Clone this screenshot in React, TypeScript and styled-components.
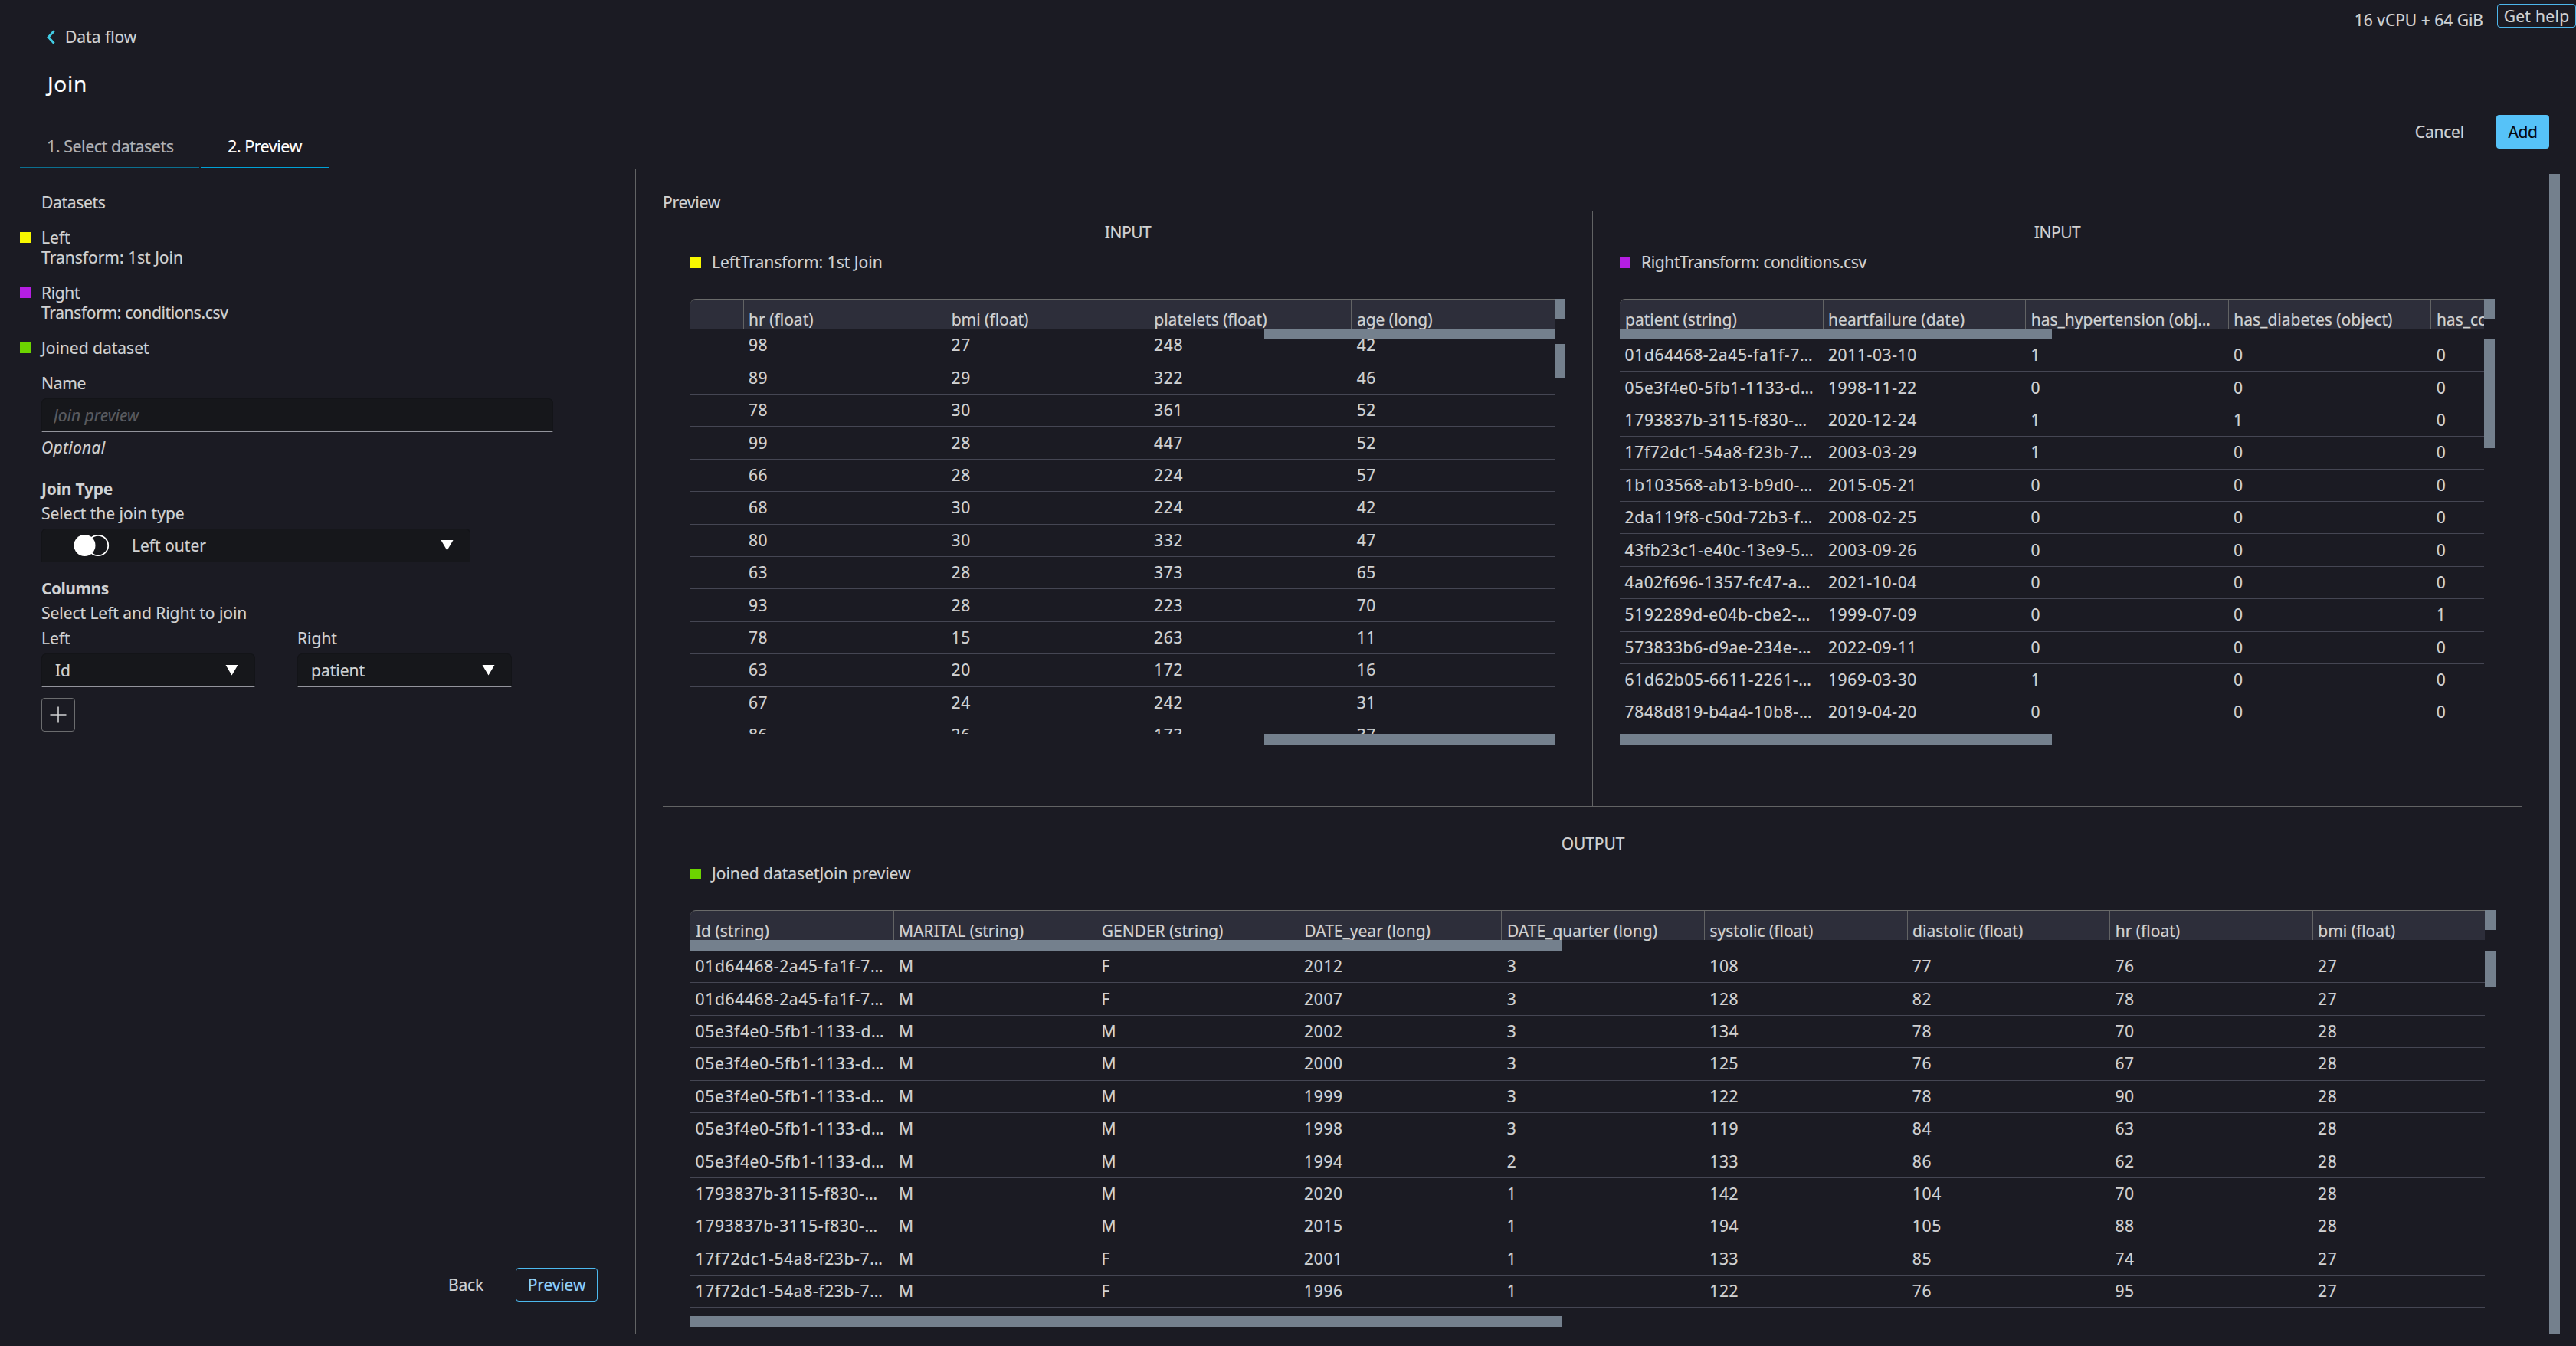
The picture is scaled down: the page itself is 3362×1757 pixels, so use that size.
import React from "react";
import styled, { createGlobalStyle } from "styled-components";

const GlobalStyle = createGlobalStyle`
  * { box-sizing: border-box; }
  html, body { margin: 0; background: #1b1b23; overflow: hidden; }
  body {
    font-family: "Noto Sans", "Open Sans", sans-serif;
    font-size: 21px;
    line-height: 26px;
    color: #d1d2d3;
    -webkit-text-stroke: 0.2px currentColor;
  }
  button, input { font: inherit; color: inherit; }
`;

/* ---------- shell ---------- */

const Shell = styled.div`
  display: flex;
  flex-direction: column;
  width: 3362px;
  height: 1757px;
  background: #1b1b23;
  overflow: hidden;
`;

const TopBar = styled.header`
  display: flex;
  justify-content: space-between;
  align-items: flex-start;
  height: 75px;
  padding-left: 61px;
`;

const BackLink = styled.a`
  display: flex;
  align-items: center;
  gap: 13px;
  height: 28px;
  margin-top: 34px;
`;

const Status = styled.div`
  display: flex;
  align-items: flex-start;
`;

const Resources = styled.span`
  line-height: 28px;
  padding: 12px 18px 0 0;
`;

const HelpButton = styled.button`
  width: 103px;
  height: 31px;
  margin-top: 5px;
  padding: 1px 0 0;
  line-height: 28px;
  letter-spacing: 0.3px;
  white-space: nowrap;
  background: transparent;
  border: 1px solid #4db5ea;
  border-radius: 4px;
`;

const PageTitle = styled.h1`
  height: 54px;
  margin: 0;
  padding: 14px 0 0 62px;
  font-size: 28px;
  font-weight: 400;
  line-height: 40px;
  letter-spacing: 0.7px;
  color: #fff;
`;

const TabBar = styled.nav`
  display: flex;
  justify-content: space-between;
  height: 92px;
  margin: 0 21px 0 26px;
  border-bottom: 1px solid #34353d;
`;

const Tabs = styled.div`
  display: flex;
  align-items: flex-end;
  gap: 2px;
  padding-bottom: 1px;
`;

const Tab = styled.a<{ $active?: boolean; $width: number }>`
  width: ${(p) => p.$width}px;
  padding: 0 0 13px 35px;
  font-size: 21.5px;
  line-height: 28px;
  letter-spacing: -0.5px;
  white-space: nowrap;
  color: ${(p) => (p.$active ? "#fff" : "#b0b1b4")};
  border-bottom: 1px solid ${(p) => (p.$active ? "#00a1d6" : "#0b6f90")};
`;

const Actions = styled.div`
  display: flex;
  align-items: center;
  gap: 42px;
  height: 44px;
  margin: 21px 14px 0 0;
`;

const PlainButton = styled.button`
  padding: 0;
  background: none;
  border: 0;
  letter-spacing: -0.2px;
`;

const AddButton = styled.button`
  width: 69px;
  height: 44px;
  padding: 0;
  border: 0;
  border-radius: 4px;
  letter-spacing: -0.4px;
  color: #07090c;
  background: #56c2f8;
`;

const Workspace = styled.main`
  display: flex;
  height: 1520px;
  padding-right: 21px;
`;

/* ---------- sidebar ---------- */

const Sidebar = styled.aside`
  display: flex;
  flex-direction: column;
  width: 830px;
  padding: 30px 49px 42px 26px;
  border-right: 1px solid #626364;
`;

const Indented = styled.div`
  display: flex;
  flex-direction: column;
  padding-left: 28px;
`;

const SidebarTitle = styled.div`
  padding-left: 28px;
  letter-spacing: -0.3px;
`;

const LegendRow = styled.div<{ $top: number }>`
  display: flex;
  gap: 14px;
  margin-top: ${(p) => p.$top}px;
`;

const Swatch = styled.span<{ $color: string; $drop?: number }>`
  flex: none;
  width: 14px;
  height: 14px;
  margin-top: ${(p) => p.$drop ?? 6}px;
  background: ${(p) => p.$color};
`;

const LegendText = styled.div<{ $tight?: boolean }>`
  letter-spacing: ${(p) => (p.$tight ? "-0.35px" : "0")};
  white-space: nowrap;
`;

const Label = styled.div<{ $top: number; $bold?: boolean; $italic?: boolean; $spacing?: number }>`
  margin-top: ${(p) => p.$top}px;
  font-weight: ${(p) => (p.$bold ? 700 : 400)};
  font-style: ${(p) => (p.$italic ? "italic" : "normal")};
  letter-spacing: ${(p) => p.$spacing ?? 0}px;
  -webkit-text-stroke-width: ${(p) => (p.$bold ? "0" : "0.2px")};
  white-space: nowrap;
`;

const NameInput = styled.input`
  width: 668px;
  height: 44px;
  margin-top: 7px;
  padding: 0 15px;
  outline: 0;
  background: #16171b;
  border: 1px solid #131418;
  border-bottom-color: #93949c;
  border-radius: 6px 6px 0 0;
  letter-spacing: 0;
  &::placeholder { color: #5b5c60; opacity: 1; font-style: italic; }
`;

const SelectBox = styled.div<{ $width: number; $indent: number }>`
  display: flex;
  align-items: center;
  justify-content: space-between;
  width: ${(p) => p.$width}px;
  height: 44px;
  margin-top: 7px;
  padding: 0 21px 0 ${(p) => p.$indent}px;
  background: #16171b;
  border: 1px solid #131418;
  border-bottom-color: #93949c;
  border-radius: 6px 6px 0 0;
`;

const SelectValue = styled.span`
  display: flex;
  align-items: center;
  gap: 28px;
`;

const ColumnPair = styled.div`
  display: flex;
  gap: 55px;
`;

const IconButton = styled.button`
  display: grid;
  place-items: center;
  width: 44px;
  height: 44px;
  margin-top: 14px;
  padding: 0;
  background: transparent;
  border: 1px solid #6b6c6e;
  border-radius: 4px;
`;

const SidebarFooter = styled.div`
  display: flex;
  justify-content: flex-end;
  align-items: center;
  gap: 42px;
  margin-top: auto;
`;

const PreviewButton = styled.button`
  width: 107px;
  height: 44px;
  padding: 0;
  letter-spacing: -0.1px;
  color: #92d2fa;
  background: transparent;
  border: 1px solid #4db9ee;
  border-radius: 4px;
`;

/* ---------- preview panels ---------- */

const PreviewArea = styled.section`
  display: flex;
  flex-direction: column;
  width: 2497px;
  padding: 0 35px;
`;

const PreviewTitle = styled.div`
  height: 54px;
  padding-top: 30px;
  letter-spacing: -0.2px;
`;

const Inputs = styled.div`
  display: grid;
  grid-template-columns: 1214px 1fr;
  height: 778px;
  border-bottom: 1px solid #626364;
`;

const Panel = styled.div<{ $pad: string; $divided?: boolean }>`
  display: flex;
  flex-direction: column;
  padding: ${(p) => p.$pad};
  border-right: ${(p) => (p.$divided ? "1px solid #626364" : "0")};
  min-width: 0;
`;

const PanelTitle = styled.div<{ $spacing: number }>`
  text-align: center;
  letter-spacing: ${(p) => p.$spacing}px;
`;

const Grid = styled.div`
  margin-top: 35px;
`;

const Viewport = styled.div<{ $height: number }>`
  display: grid;
  grid-template-columns: minmax(0, 1fr) 14px;
  grid-template-rows: ${(p) => p.$height}px 14px;
`;

const HeadCells = styled.div`
  display: flex;
  overflow-x: clip;
  background: #2d2e3a;
  border-top: 1px solid #6a6b6a;
  border-radius: 7px 0 0 0;
`;

const HeadCell = styled.div<{ $width: number }>`
  flex: none;
  width: ${(p) => p.$width}px;
  padding: 14px 0 0 7px;
  line-height: 24px;
  white-space: nowrap;
  & + & { padding-left: 6.5px; border-left: 1px solid #626364; }
`;

const BodyCells = styled.div`
  overflow: hidden;
`;

const Row = styled.div<{ $shift: number }>`
  display: flex;
  align-items: center;
  height: 42.4px;
  padding-bottom: 1px;
  border-bottom: 1px solid #454653;
  &:first-child { margin-top: ${(p) => -p.$shift}px; }
`;

const Cell = styled.div<{ $width: number }>`
  flex: none;
  width: ${(p) => p.$width}px;
  padding-left: 7.3px;
  letter-spacing: 0.65px;
  white-space: nowrap;
  &:first-child { padding-left: 6.6px; }
`;

const VThumb = styled.div<{ $from: number; $size: number }>`
  height: ${(p) => p.$size}px;
  margin-top: ${(p) => p.$from}px;
  background: #74808d;
`;

const HThumb = styled.div<{ $from: number; $size: number }>`
  width: ${(p) => p.$size}px;
  height: 14px;
  margin-left: ${(p) => p.$from}px;
  background: #74808d;
`;

const PageThumb = styled.div`
  width: 14px;
  margin-top: 6px;
  background: #74808d;
`;

/* ---------- icons ---------- */

const ChevronLeft = () => (
  <svg width="11" height="19" viewBox="0 0 11 19" fill="none">
    <path d="M9.5 1.5 L2.2 9.5 L9.5 17.5" stroke="#42cbe2" strokeWidth="3" />
  </svg>
);

const Caret = () => (
  <svg width="17" height="14" viewBox="0 0 17 14">
    <path d="M0.5 0 H16.5 L8.5 13.5 Z" fill="#fff" />
  </svg>
);

const LeftJoinIcon = () => (
  <svg width="48" height="30" viewBox="0 0 48 30" fill="none">
    <circle cx="32" cy="15" r="13.2" stroke="#fff" strokeWidth="1.8" />
    <circle cx="14.5" cy="15" r="14" fill="#fff" />
  </svg>
);

const PlusIcon = () => (
  <svg width="22" height="22" viewBox="0 0 22 22">
    <path d="M11 0.5 V21.5 M0.5 11 H21.5" stroke="#d1d2d3" strokeWidth="1.6" />
  </svg>
);

/* ---------- data ---------- */

const YELLOW = "#f8f800";
const PURPLE = "#b51ee2";
const GREEN = "#6cd400";
const COL = 264.6;

type Column = { label: string; width: number };
type Bar = { from: number; size: number };
type TableProps = {
  columns: Column[];
  rows: string[][];
  bodyHeight: number;
  shift?: number;
  hBar: Bar;
  vBar: Bar;
};

const leftTable: TableProps = {
  columns: [
    { label: "", width: 68.6 },
    { label: "hr (float)", width: COL },
    { label: "bmi (float)", width: COL },
    { label: "platelets (float)", width: COL },
    { label: "age (long)", width: COL + 2 },
  ],
  rows: [
    ["", "98", "27", "248", "42"],
    ["", "89", "29", "322", "46"],
    ["", "78", "30", "361", "52"],
    ["", "99", "28", "447", "52"],
    ["", "66", "28", "224", "57"],
    ["", "68", "30", "224", "42"],
    ["", "80", "30", "332", "47"],
    ["", "63", "28", "373", "65"],
    ["", "93", "28", "223", "70"],
    ["", "78", "15", "263", "11"],
    ["", "63", "20", "172", "16"],
    ["", "67", "24", "242", "31"],
    ["", "86", "26", "173", "37"],
  ],
  bodyHeight: 515,
  shift: 12.8,
  hBar: { from: 749, size: 379 },
  vBar: { from: 6, size: 45 },
};

const rightTable: TableProps = {
  columns: [
    { label: "patient (string)", width: COL },
    { label: "heartfailure (date)", width: COL },
    { label: "has_hypertension (obj…", width: COL },
    { label: "has_diabetes (object)", width: COL },
    { label: "has_co", width: 80 },
  ],
  rows: [
    ["01d64468-2a45-fa1f-7…", "2011-03-10", "1", "0", "0"],
    ["05e3f4e0-5fb1-1133-d…", "1998-11-22", "0", "0", "0"],
    ["1793837b-3115-f830-…", "2020-12-24", "1", "1", "0"],
    ["17f72dc1-54a8-f23b-7…", "2003-03-29", "1", "0", "0"],
    ["1b103568-ab13-b9d0-…", "2015-05-21", "0", "0", "0"],
    ["2da119f8-c50d-72b3-f…", "2008-02-25", "0", "0", "0"],
    ["43fb23c1-e40c-13e9-5…", "2003-09-26", "0", "0", "0"],
    ["4a02f696-1357-fc47-a…", "2021-10-04", "0", "0", "0"],
    ["5192289d-e04b-cbe2-…", "1999-07-09", "0", "0", "1"],
    ["573833b6-d9ae-234e-…", "2022-09-11", "0", "0", "0"],
    ["61d62b05-6611-2261-…", "1969-03-30", "1", "0", "0"],
    ["7848d819-b4a4-10b8-…", "2019-04-20", "0", "0", "0"],
  ],
  bodyHeight: 515,
  hBar: { from: 0, size: 564 },
  vBar: { from: 0, size: 142 },
};

const outputTable: TableProps = {
  columns: [
    { label: "Id (string)", width: COL },
    { label: "MARITAL (string)", width: COL },
    { label: "GENDER (string)", width: COL },
    { label: "DATE_year (long)", width: COL },
    { label: "DATE_quarter (long)", width: COL },
    { label: "systolic (float)", width: COL },
    { label: "diastolic (float)", width: COL },
    { label: "hr (float)", width: COL },
    { label: "bmi (float)", width: COL },
  ],
  rows: [
    ["01d64468-2a45-fa1f-7…", "M", "F", "2012", "3", "108", "77", "76", "27"],
    ["01d64468-2a45-fa1f-7…", "M", "F", "2007", "3", "128", "82", "78", "27"],
    ["05e3f4e0-5fb1-1133-d…", "M", "M", "2002", "3", "134", "78", "70", "28"],
    ["05e3f4e0-5fb1-1133-d…", "M", "M", "2000", "3", "125", "76", "67", "28"],
    ["05e3f4e0-5fb1-1133-d…", "M", "M", "1999", "3", "122", "78", "90", "28"],
    ["05e3f4e0-5fb1-1133-d…", "M", "M", "1998", "3", "119", "84", "63", "28"],
    ["05e3f4e0-5fb1-1133-d…", "M", "M", "1994", "2", "133", "86", "62", "28"],
    ["1793837b-3115-f830-…", "M", "M", "2020", "1", "142", "104", "70", "28"],
    ["1793837b-3115-f830-…", "M", "M", "2015", "1", "194", "105", "88", "28"],
    ["17f72dc1-54a8-f23b-7…", "M", "F", "2001", "1", "133", "85", "74", "27"],
    ["17f72dc1-54a8-f23b-7…", "M", "F", "1996", "1", "122", "76", "95", "27"],
  ],
  bodyHeight: 477,
  hBar: { from: 0, size: 1138 },
  vBar: { from: 0, size: 47 },
};

/* ---------- composed parts ---------- */

function DataTable({ columns, rows, bodyHeight, shift = 0, hBar, vBar }: TableProps) {
  return (
    <Grid>
      <Viewport $height={39}>
        <HeadCells>
          {columns.map((c, i) => (
            <HeadCell key={i} $width={c.width}>
              {c.label}
            </HeadCell>
          ))}
        </HeadCells>
        <VThumb $from={0} $size={26} />
        <HThumb $from={hBar.from} $size={hBar.size} />
      </Viewport>
      <Viewport $height={bodyHeight}>
        <BodyCells>
          {rows.map((r, i) => (
            <Row key={i} $shift={shift}>
              {r.map((v, j) => (
                <Cell key={j} $width={columns[j].width}>
                  {v}
                </Cell>
              ))}
            </Row>
          ))}
        </BodyCells>
        <VThumb $from={vBar.from} $size={vBar.size} />
        <HThumb $from={hBar.from} $size={hBar.size} />
      </Viewport>
    </Grid>
  );
}

function PanelLegend({ color, children, tight }: { color: string; children: string; tight?: boolean }) {
  return (
    <LegendRow $top={13}>
      <Swatch $color={color} $drop={7} />
      <LegendText $tight={tight}>{children}</LegendText>
    </LegendRow>
  );
}

export default function App() {
  return (
    <>
      <GlobalStyle />
      <Shell>
        <TopBar>
          <BackLink>
            <ChevronLeft />
            Data flow
          </BackLink>
          <Status>
            <Resources>16 vCPU + 64 GiB</Resources>
            <HelpButton>Get help</HelpButton>
          </Status>
        </TopBar>
        <PageTitle>Join</PageTitle>
        <TabBar>
          <Tabs>
            <Tab $width={234}>1. Select datasets</Tab>
            <Tab $width={167} $active>
              2. Preview
            </Tab>
          </Tabs>
          <Actions>
            <PlainButton>Cancel</PlainButton>
            <AddButton>Add</AddButton>
          </Actions>
        </TabBar>
        <Workspace>
          <Sidebar>
            <SidebarTitle>Datasets</SidebarTitle>
            <LegendRow $top={20}>
              <Swatch $color={YELLOW} />
              <LegendText>
                <div>Left</div>
                <div>Transform: 1st Join</div>
              </LegendText>
            </LegendRow>
            <LegendRow $top={20}>
              <Swatch $color={PURPLE} />
              <LegendText $tight>
                <div>Right</div>
                <div>Transform: conditions.csv</div>
              </LegendText>
            </LegendRow>
            <LegendRow $top={20}>
              <Swatch $color={GREEN} />
              <LegendText>Joined dataset</LegendText>
            </LegendRow>
            <Indented>
              <Label $top={20} $spacing={-0.3}>Name</Label>
              <NameInput placeholder="Join preview" />
              <Label $top={7} $italic $spacing={0.3}>Optional</Label>
              <Label $top={28} $bold $spacing={-0.2}>Join Type</Label>
              <Label $top={6}>Select the join type</Label>
              <SelectBox $width={560} $indent={41}>
                <SelectValue>
                  <LeftJoinIcon />
                  Left outer
                </SelectValue>
                <Caret />
              </SelectBox>
              <Label $top={21} $bold $spacing={-0.5}>Columns</Label>
              <Label $top={6} $spacing={-0.05}>Select Left and Right to join</Label>
              <ColumnPair>
                <div>
                  <Label $top={7}>Left</Label>
                  <SelectBox $width={279} $indent={17}>
                    Id
                    <Caret />
                  </SelectBox>
                </div>
                <div>
                  <Label $top={7}>Right</Label>
                  <SelectBox $width={280} $indent={17}>
                    patient
                    <Caret />
                  </SelectBox>
                </div>
              </ColumnPair>
              <IconButton aria-label="Add column pair">
                <PlusIcon />
              </IconButton>
            </Indented>
            <SidebarFooter>
              <PlainButton>Back</PlainButton>
              <PreviewButton>Preview</PreviewButton>
            </SidebarFooter>
          </Sidebar>
          <PreviewArea>
            <PreviewTitle>Preview</PreviewTitle>
            <Inputs>
              <Panel $pad="15px 35px 0 36px" $divided>
                <PanelTitle $spacing={-0.5}>INPUT</PanelTitle>
                <PanelLegend color={YELLOW}>LeftTransform: 1st Join</PanelLegend>
                <DataTable {...leftTable} />
              </Panel>
              <Panel $pad="15px 36px 0 35px">
                <PanelTitle $spacing={-0.5}>INPUT</PanelTitle>
                <PanelLegend color={PURPLE} tight>
                  RightTransform: conditions.csv
                </PanelLegend>
                <DataTable {...rightTable} />
              </Panel>
            </Inputs>
            <Panel $pad="35px 35px 0 36px">
              <PanelTitle $spacing={-0.1}>OUTPUT</PanelTitle>
              <PanelLegend color={GREEN}>Joined datasetJoin preview</PanelLegend>
              <DataTable {...outputTable} />
            </Panel>
          </PreviewArea>
          <PageThumb />
        </Workspace>
      </Shell>
    </>
  );
}
